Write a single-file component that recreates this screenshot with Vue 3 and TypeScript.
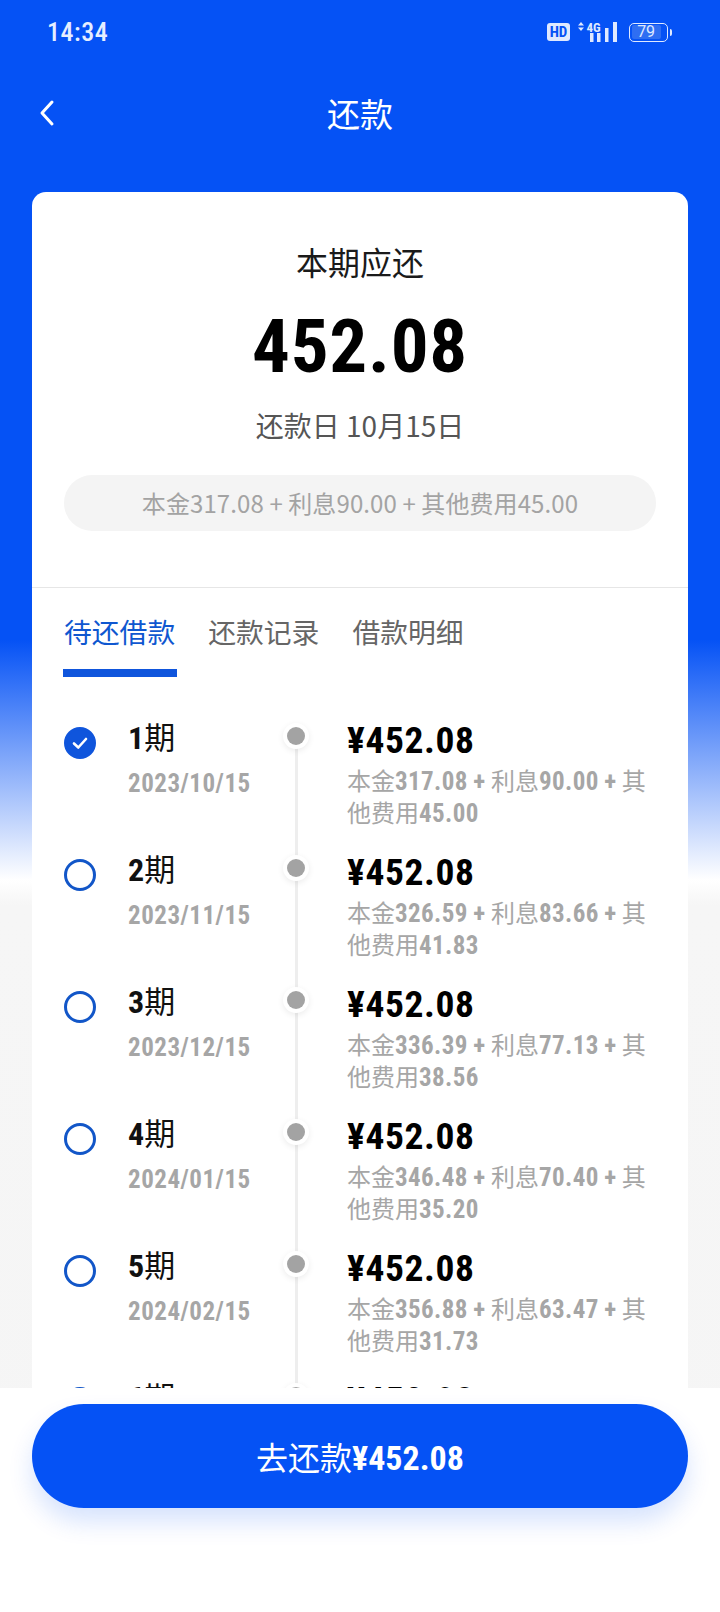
<script setup lang="ts">
interface Row { n: number; date: string; p: string; i: string; o: string }
const rows: Row[] = [
  { n: 1, date: '2023/10/15', p: '317.08', i: '90.00', o: '45.00' },
  { n: 2, date: '2023/11/15', p: '326.59', i: '83.66', o: '41.83' },
  { n: 3, date: '2023/12/15', p: '336.39', i: '77.13', o: '38.56' },
  { n: 4, date: '2024/01/15', p: '346.48', i: '70.40', o: '35.20' },
  { n: 5, date: '2024/02/15', p: '356.88', i: '63.47', o: '31.73' },
  { n: 6, date: '2024/03/15', p: '367.60', i: '56.32', o: '28.16' },
]
const tabs = ['待还借款', '还款记录', '借款明细']
</script>

<template>
  <div class="page">
    <div class="status">
      <span class="time">14:34</span>
      <div class="status-icons">
        <span class="hd">HD</span>
        <svg width="40" height="24" viewBox="0 0 40 24" class="signal">
          <path d="M0 5.5 3 2 6 5.5ZM0 7.5 3 11 6 7.5Z" fill="#dfe9ff" />
          <text x="8.5" y="12" class="net">4G</text>
          <rect x="12" y="13" width="3.5" height="9" fill="#dfe9ff" />
          <rect x="19" y="13" width="3.5" height="9" fill="#dfe9ff" />
          <rect x="27" y="8" width="3.5" height="14" fill="#dfe9ff" />
          <rect x="35" y="2" width="4" height="20" fill="#dfe9ff" />
        </svg>
        <span class="battery"><span class="level">79</span></span>
        <span class="nub"></span>
      </div>
    </div>
    <div class="nav">
      <svg class="back" width="20" height="30" viewBox="0 0 20 30">
        <path d="M15 4 5 15 15 26" fill="none" stroke="#fff" stroke-width="3" stroke-linecap="round" stroke-linejoin="round" />
      </svg>
      <span class="title">还款</span>
    </div>
    <div class="card">
      <div class="summary">
        <div class="due">本期应还</div>
        <div class="amount">452.08</div>
        <div class="date">还款日 10月15日</div>
        <div class="pill">本金317.08 + 利息90.00 + 其他费用45.00</div>
      </div>
      <div class="tabs">
        <div v-for="(t, idx) in tabs" :key="t" class="tab" :class="{ active: idx === 0 }">{{ t }}</div>
      </div>
      <div class="list">
        <div v-for="r in rows" :key="r.n" class="row">
          <div class="radio" :class="{ checked: r.n === 1 }">
            <svg v-if="r.n === 1" width="20" height="20" viewBox="0 0 20 20">
              <path d="M4 10.5 8.3 14.5 16 6" fill="none" stroke="#fff" stroke-width="2.6" stroke-linecap="round" stroke-linejoin="round" />
            </svg>
          </div>
          <div class="period">
            <div class="num"><b>{{ r.n }}</b>期</div>
            <div class="rdate">{{ r.date }}</div>
          </div>
          <div class="rail"><span class="dot"></span></div>
          <div class="info">
            <div class="yen">¥452.08</div>
            <div class="detail">本金<b>{{ r.p }}</b> <b>+</b> 利息<b>{{ r.i }}</b> <b>+</b> 其他费用<b>{{ r.o }}</b></div>
          </div>
        </div>
      </div>
    </div>
    <div class="footer">
      <button class="pay">去还款<b>¥452.08</b></button>
    </div>
  </div>
</template>

<style>
html, body { margin: 0; padding: 0; }
</style>

<style scoped>
.page {
  position: relative;
  width: 720px;
  height: 1612px;
  overflow: hidden;
  font-family: "Noto Sans CJK SC", "Noto Sans", sans-serif;
  background: linear-gradient(180deg, #0552f5 0, #0552f5 640px, #ffffff 880px, #f6f6f6 905px, #f5f5f5 100%);
}
.status {
  height: 64px;
  padding: 0 48px 0 47px;
  display: flex;
  justify-content: space-between;
  align-items: center;
  color: #e6eeff;
  box-sizing: border-box;
}
.time { font: 500 26px "Roboto", sans-serif; font-stretch: 85%; letter-spacing: .5px; }
.status-icons { display: flex; align-items: center; }
.hd {
  width: 23px; height: 18px; border-radius: 3px; background: #dfe9ff; color: #0552f5;
  font: 700 15px "Roboto", sans-serif; font-stretch: 75%; text-align: center; line-height: 18px;
  margin-right: 8px;
}
.net { font: 700 13px "Roboto", sans-serif; font-stretch: 75%; fill: #dfe9ff; }
.signal { margin-right: 11px; }
.battery {
  width: 39px; height: 19px; border: 1.5px solid #dfe9ff; border-radius: 5px; box-sizing: border-box;
  padding: 1.5px; display: flex;
}
.level {
  width: 86%; background: #2f6ef2; border-radius: 2px; color: #dfe9ff;
  font: 400 16px "Roboto", sans-serif; line-height: 13px; text-align: center;
}
.nub { width: 2px; height: 7px; background: #dfe9ff; margin-left: 2px; border-radius: 0 2px 2px 0; }
.nav {
  height: 64px;
  margin-top: 17px;
  position: relative;
  display: flex;
  align-items: center;
  justify-content: center;
}
.back { position: absolute; left: 37px; top: 17px; }
.title { color: #fff; font-size: 33px; font-weight: 400; }
.card {
  margin: 47px 32px 0;
  background: #fff;
  border-radius: 14px 14px 0 0;
}
.summary {
  height: 396px;
  box-sizing: border-box;
  padding-top: 49px;
  border-bottom: 1px solid #e6e6e6;
  display: flex;
  flex-direction: column;
  align-items: center;
}
.due { font-size: 32px; line-height: 40px; color: #1a1a1a; }
.amount {
  font: 700 75px/80px "Roboto", sans-serif;
  font-stretch: 75%;
  color: #000;
  margin-top: 25px;
  letter-spacing: .8px;
}
.date { font-size: 28px; line-height: 40px; color: #555; margin-top: 19px; }
.pill {
  width: 592px; height: 56px; border-radius: 28px; background: #f4f4f4;
  margin-top: 30px; color: #a3a3a3; font-size: 24px; line-height: 56px; text-align: center; letter-spacing: .1px;
}
.tabs { display: flex; gap: 33px; padding: 0 32px; height: 89px; }
.tab {
  font-size: 27.8px; line-height: 86px; color: #666; position: relative;
}
.tab.active { color: #0f57d0; }
.tab.active::after {
  content: ""; position: absolute; left: -1px; right: -2px; bottom: 0; height: 8px; background: #0f55dc;
}
.list { padding-top: 43px; }
.row { height: 132px; display: flex; position: relative; }
.radio {
  width: 32px; height: 32px; border: 3px solid #1256c8; border-radius: 50%;
  margin: 7px 0 0 32px; flex: none; box-sizing: border-box;
  display: flex; align-items: center; justify-content: center;
}
.radio.checked { background: #0f55dc; border-color: #0f55dc; }
.period { width: 153px; margin-left: 32px; flex: none; }
.num { font-size: 31px; line-height: 40px; color: #111; margin-top: -4px; }
.num b { font: 700 32px "Roboto", sans-serif; font-stretch: 75%; }
.rdate { font: 700 25px/34px "Roboto", sans-serif; font-stretch: 75%; color: #a6a6a6; margin-top: 10px; letter-spacing: .5px; }
.rail { width: 30px; flex: none; position: relative; }
.rail::before {
  content: ""; position: absolute; left: 14px; top: 14px; bottom: -14px; width: 3px; background: #eee;
}
.dot {
  position: absolute; left: 6px; top: 7px; width: 18px; height: 18px; border-radius: 50%;
  background: #a3a3a3; box-shadow: 0 0 0 4px #fff, 0 2px 6px 4px rgba(0,0,0,.08);
}
.info { margin-left: 36px; width: 306px; flex: none; }
.yen { font: 700 37.5px/40px "Roboto", sans-serif; font-stretch: 75%; color: #000; letter-spacing: .6px; }
.detail { font-size: 24px; line-height: 31px; color: #a6a6a6; margin-top: 4px; }
.detail b { font: 700 25px "Roboto", sans-serif; font-stretch: 75%; letter-spacing: .4px; }
.footer {
  position: absolute; left: 0; right: 0; bottom: 0; height: 224px; background: #fff;
  padding: 16px 32px 0; box-sizing: border-box;
}
.pay {
  width: 100%; height: 104px; border: 0; border-radius: 52px; background: #0552f5; color: #fff;
  font-family: inherit; font-size: 32px; box-shadow: 0 14px 24px rgba(5,82,245,.16); display: block;
}
.pay b { font: 700 34px "Roboto", sans-serif; font-stretch: 75%; }
</style>
